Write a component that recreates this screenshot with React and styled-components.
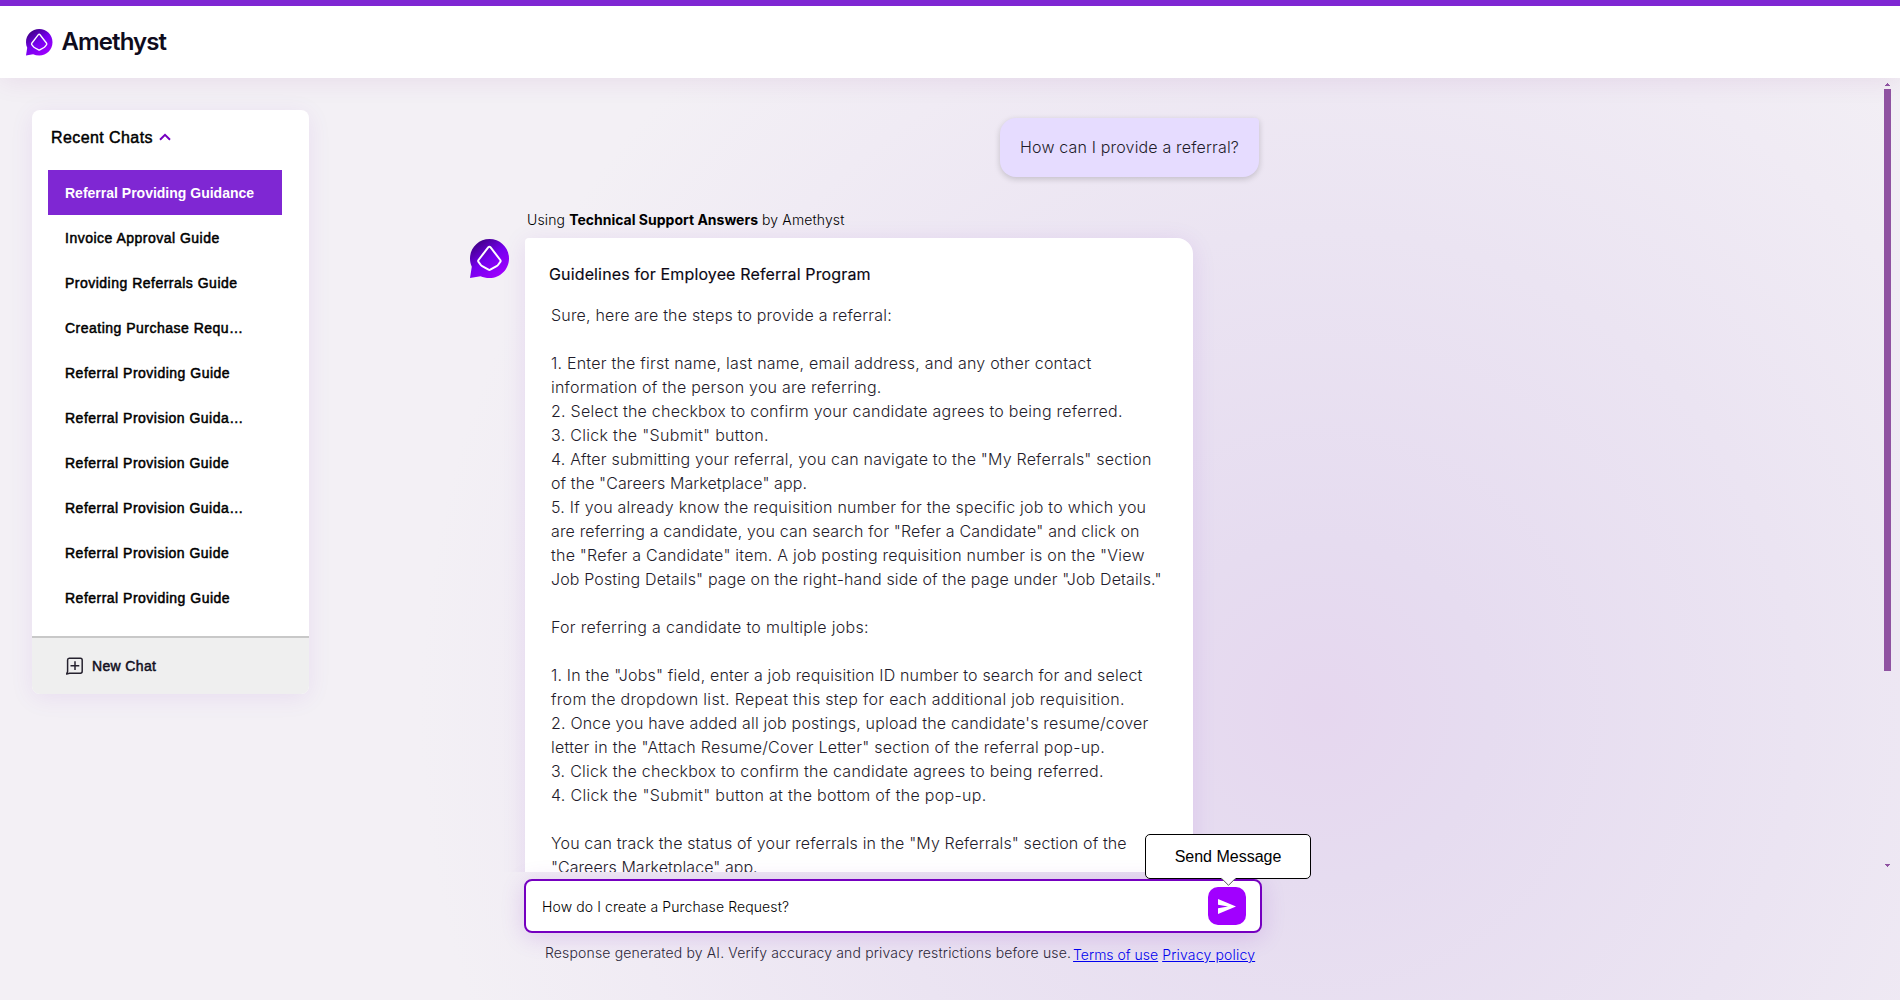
import React from "react";
import styled, { createGlobalStyle } from "styled-components";

const sans = `"Liberation Sans", Arial, sans-serif`;
const inter = `Inter, "Noto Sans", sans-serif`;

const GlobalStyle = createGlobalStyle`
  * { box-sizing: border-box; }
  body { margin: 0; overflow: hidden; font-family: ${inter}; }
`;

const Page = styled.div`
  display: flex;
  flex-direction: column;
  width: 1900px;
  height: 1000px;
  overflow: hidden;
  background: radial-gradient(
    circle at 1320px 710px,
    #e6d7ef 0,
    #e6dcf0 170px,
    #ebe4f2 480px,
    #f0ebf4 720px,
    #f3f0f5 900px
  );
`;

const Header = styled.header`
  display: flex;
  align-items: center;
  gap: 10px;
  flex: none;
  height: 78px;
  padding: 1px 26px 0;
  border-top: 6px solid #7f27d3;
  background: #fff;
  box-shadow: 0 4px 24px rgba(117, 0, 120, 0.08);
`;

const BrandName = styled.span`
  font: 600 24px/30px ${inter};
  letter-spacing: -0.9px;
  color: #0f0c1d;
  margin: -2px 0 0 -1px;
`;

const LogoSvg = styled.svg`
  display: block;
  flex: none;
  width: ${(p) => p.$size}px;
  height: ${(p) => p.$size}px;
`;

const Main = styled.main`
  display: flex;
  flex: 1;
  min-height: 0;
`;

const Sidebar = styled.aside`
  width: 277px;
  height: 584px;
  margin: 32px 0 0 32px;
  display: flex;
  flex-direction: column;
  flex: none;
  border-radius: 8px;
  overflow: hidden;
  background: #fff;
  box-shadow: 0 4px 24px rgba(117, 0, 192, 0.08);
`;

const SidebarHeading = styled.div`
  display: flex;
  align-items: center;
  gap: 6px;
  height: 60px;
  padding: 0 0 5px 19px;
  font: 400 16px/20px ${sans};
  letter-spacing: 0.42px;
  -webkit-text-stroke: 0.45px #000;
  color: #000;

  svg { margin-top: -1px; }
`;

const ChatList = styled.ul`
  flex: 1;
  margin: 0;
  padding: 0 27px 0 16px;
  list-style: none;
`;

const ChatItem = styled.li`
  height: 45px;
  padding: 1px 16px 0 17px;
  font: ${(p) => (p.$active ? 700 : 400)} 14px/45px ${sans};
  letter-spacing: ${(p) => (p.$active ? 0 : 0.49)}px;
  -webkit-text-stroke: ${(p) => (p.$active ? "0" : "0.5px #000")};
  white-space: nowrap;
  color: ${(p) => (p.$active ? "#fff" : "#000")};
  background: ${(p) => (p.$active ? "#7f27d3" : "transparent")};
`;

const NewChat = styled.div`
  display: flex;
  align-items: center;
  gap: 9px;
  height: 58px;
  padding-left: 34px;
  border-top: 2px solid #c8c8c8;
  background: #efefef;
  font: 400 14px/20px ${sans};
  letter-spacing: 0.35px;
  -webkit-text-stroke: 0.5px #13101f;
  color: #13101f;
`;

const ChatPane = styled.section`
  display: flex;
  flex-direction: column;
  flex: 1;
  min-width: 0;
`;

const ScrollRow = styled.div`
  display: flex;
  justify-content: space-between;
  height: 794px;
  flex: none;
  overflow: hidden;
`;

const Thread = styled.div`
  display: flex;
  flex-direction: column;
  width: 950px;
  padding: 40px 0 0 161px;
`;

const UserBubble = styled.div`
  align-self: flex-end;
  flex: none;
  width: 259px;
  height: 59px;
  padding: 17px 0 0 20px;
  border-radius: 16px 4px 16px 16px;
  background: #e6dcff;
  box-shadow: 0 2px 6px rgba(0, 0, 0, 0.18);
  font: 300 16px/24px ${inter};
  letter-spacing: 0.17px;
  color: #1f1c2b;
`;

const SourceLine = styled.div`
  margin: 33px 0 8px 57px;
  font: 300 14px/20px ${inter};
  letter-spacing: 0.13px;
  color: #000;

  strong { font-weight: 700; letter-spacing: 0; }
`;

const Answer = styled.div`
  display: flex;
  align-items: flex-start;
  flex: none;
  gap: 16px;
`;

const Avatar = styled.div`
  padding-top: 1px;
`;

const AnswerCard = styled.article`
  width: 668px;
  height: 700px;
  padding: 24px 0 0 24px;
  border-radius: 4px 16px 16px 16px;
  background: #fff;
  box-shadow: 0 4px 24px rgba(117, 0, 192, 0.1);
`;

const AnswerTitle = styled.h2`
  margin: 0 0 17px;
  font: 400 16px/24px ${inter};
  letter-spacing: 0.14px;
  -webkit-text-stroke: 0.15px #0b0814;
  color: #0b0814;
`;

const Line = styled.div`
  height: 24px;
  padding-left: 2px;
  font: 300 16px/24px ${inter};
  letter-spacing: ${(p) => p.$track}px;
  white-space: nowrap;
  color: #1f1c2b;
`;

const Scrollbar = styled.div`
  display: flex;
  flex-direction: column;
  align-items: center;
  width: 7px;
  margin-right: 9px;
  padding: 5px 0;
`;

const Thumb = styled.div`
  width: 7px;
  height: 582px;
  margin: 3px 0 auto;
  background: #8f52a1;
`;

const Composer = styled.div`
  display: flex;
  align-items: center;
  justify-content: space-between;
  flex: none;
  width: 738px;
  height: 54px;
  margin: 7px 0 0 215px;
  padding: 0 14px 0 16px;
  border: 2px solid #7500c0;
  border-radius: 8px;
  background: #fff;
  box-shadow: 0 4px 24px rgba(117, 0, 192, 0.16);
`;

const Draft = styled.span`
  font: 300 14px/20px ${inter};
  letter-spacing: 0.11px;
  color: #000;
  padding-top: 1px;
`;

const SendButton = styled.div`
  position: relative;
  display: flex;
  align-items: center;
  justify-content: center;
  width: 38px;
  height: 38px;
  border-radius: 10px;
  background: #a100ff;
`;

const Tooltip = styled.div`
  position: absolute;
  left: -63px;
  bottom: 46px;
  display: flex;
  align-items: center;
  justify-content: center;
  width: 166px;
  height: 45px;
  border: 1px solid #000;
  border-radius: 5px;
  background: #fff;
  font: 400 16px/20px ${sans};
  color: #000;

  svg { position: absolute; left: 75px; top: 42px; }
`;

const Legal = styled.div`
  display: flex;
  gap: 4px;
  margin: 10px 0 0 236px;
  font: 300 14px/20px ${inter};
  white-space: nowrap;
`;

const Disclaimer = styled.span`
  letter-spacing: 0.155px;
  color: #2b2638;
  margin-right: -2px;
`;

const LegalLink = styled.a`
  padding-top: 2px;
  color: #0000ee;
  letter-spacing: ${(p) => p.$track}px;
  text-decoration: underline;
`;

function Logo({ size, id }) {
  return (
    <LogoSvg $size={size} viewBox="0 0 39 39">
      <defs>
        <linearGradient id={id} x1="0.15" y1="0.05" x2="0.8" y2="0.95">
          <stop offset="0" stopColor="#3d0080" />
          <stop offset="0.5" stopColor="#7500ee" />
          <stop offset="1" stopColor="#a100ff" />
        </linearGradient>
      </defs>
      <path
        fill={`url(#${id})`}
        d="M19.5 0C30.3 0 39 8.7 39 19.4S30.3 39 19.5 39c-3.3 0-6.3-.6-9-1.8L0 39l1.8-11.3C.6 25.2 0 22.4 0 19.4 0 8.7 8.7 0 19.5 0Z"
      />
      <path
        fill="none"
        stroke="#fff"
        strokeWidth="2"
        strokeLinejoin="round"
        d="M18.2 8.4Q19.4 6.9 20.6 8.4L30.3 21Q31 22 30.3 22.9L28 26Q27.5 26.7 26.6 27.2L20.3 30.7Q19.4 31.2 18.5 30.7L12.2 27.2Q11.3 26.7 10.8 26L8.5 22.9Q7.8 22 8.5 21Z"
      />
    </LogoSvg>
  );
}

const chats = [
  "Referral Providing Guidance",
  "Invoice Approval Guide",
  "Providing Referrals Guide",
  "Creating Purchase Requ…",
  "Referral Providing Guide",
  "Referral Provision Guida…",
  "Referral Provision Guide",
  "Referral Provision Guida…",
  "Referral Provision Guide",
  "Referral Providing Guide",
];

const answer = [
  ["Sure, here are the steps to provide a referral:", 0.19],
  ["", 0],
  ["1. Enter the first name, last name, email address, and any other contact", 0.225],
  ["information of the person you are referring.", 0.23],
  ["2. Select the checkbox to confirm your candidate agrees to being referred.", 0.245],
  ['3. Click the "Submit" button.', 0.3],
  ['4. After submitting your referral, you can navigate to the "My Referrals" section', 0.2],
  ['of the "Careers Marketplace" app.', 0.09],
  ["5. If you already know the requisition number for the specific job to which you", 0.225],
  ['are referring a candidate, you can search for "Refer a Candidate" and click on', 0.165],
  ['the "Refer a Candidate" item. A job posting requisition number is on the "View', 0.22],
  ['Job Posting Details" page on the right-hand side of the page under "Job Details."', 0.13],
  ["", 0],
  ["For referring a candidate to multiple jobs:", 0.3],
  ["", 0],
  ['1. In the "Jobs" field, enter a job requisition ID number to search for and select', 0.18],
  ["from the dropdown list. Repeat this step for each additional job requisition.", 0.3],
  ["2. Once you have added all job postings, upload the candidate's resume/cover", 0.18],
  ['letter in the "Attach Resume/Cover Letter" section of the referral pop-up.', 0.24],
  ["3. Click the checkbox to confirm the candidate agrees to being referred.", 0.265],
  ['4. Click the "Submit" button at the bottom of the pop-up.', 0.3],
  ["", 0],
  ['You can track the status of your referrals in the "My Referrals" section of the', 0.13],
  ['"Careers Marketplace" app.', 0.04],
];

export default function App() {
  return (
    <Page>
      <GlobalStyle />
      <Header>
        <Logo size={26.5} id="brandFill" />
        <BrandName>Amethyst</BrandName>
      </Header>
      <Main>
        <Sidebar>
          <SidebarHeading>
            Recent Chats
            <svg width="12" height="8" viewBox="0 0 12 8" fill="none">
              <path d="M1 6.8 6 1.8l5 5" stroke="#7500c0" strokeWidth="2" />
            </svg>
          </SidebarHeading>
          <ChatList>
            {chats.map((title, i) => (
              <ChatItem key={i} $active={i === 0}>{title}</ChatItem>
            ))}
          </ChatList>
          <NewChat>
            <svg width="17" height="18" viewBox="0 0 17 18" fill="none" stroke="#26222f" strokeWidth="1.5">
              <path d="M.6 17 1.6 14.5V3Q1.6 1.2 3.2 1.2H14.5Q16.2 1.2 16.2 3V14.3Q16.2 16.2 14.5 16.2H3.5Z" strokeLinejoin="round" />
              <path d="M9 4.3V13M4.5 8.7H13.3" />
            </svg>
            New Chat
          </NewChat>
        </Sidebar>
        <ChatPane>
          <ScrollRow>
            <Thread>
              <UserBubble>How can I provide a referral?</UserBubble>
              <SourceLine>
                Using <strong>Technical Support Answers</strong> by Amethyst
              </SourceLine>
              <Answer>
                <Avatar>
                  <Logo size={39} id="avatarFill" />
                </Avatar>
                <AnswerCard>
                  <AnswerTitle>Guidelines for Employee Referral Program</AnswerTitle>
                  {answer.map(([text, track], i) => (
                    <Line key={i} $track={track}>{text}</Line>
                  ))}
                </AnswerCard>
              </Answer>
            </Thread>
            <Scrollbar>
              <svg width="5" height="3" viewBox="0 0 5 3" fill="#8f52a1" shapeRendering="crispEdges">
                <path d="M2 0h1v1h1v1h1v1H0V2h1V1h1Z" />
              </svg>
              <Thumb />
              <svg width="5" height="3" viewBox="0 0 5 3" fill="#8f52a1" shapeRendering="crispEdges">
                <path d="M0 0h5v1H4v1H3v1H2V2H1V1H0Z" />
              </svg>
            </Scrollbar>
          </ScrollRow>
          <Composer>
            <Draft>How do I create a Purchase Request?</Draft>
            <SendButton>
              <svg width="18" height="15" viewBox="0 0 18 15" fill="#fff">
                <path d="M0 0 18 7.5 0 15V9.2L10 7.5 0 5.8Z" />
              </svg>
              <Tooltip>
                Send Message
                <svg width="15" height="10" viewBox="0 0 15 10">
                  <path d="M0 0H15V1L7.5 8.5 0 1Z" fill="#fff" />
                  <path d="M.7 1.5 7.5 8.3 14.3 1.5" fill="none" stroke="#555" />
                </svg>
              </Tooltip>
            </SendButton>
          </Composer>
          <Legal>
            <Disclaimer>
              Response generated by AI. Verify accuracy and privacy restrictions before use.
            </Disclaimer>
            <LegalLink $track={0}>Terms of use</LegalLink>
            <LegalLink $track={0.18}>Privacy policy</LegalLink>
          </Legal>
        </ChatPane>
      </Main>
    </Page>
  );
}
